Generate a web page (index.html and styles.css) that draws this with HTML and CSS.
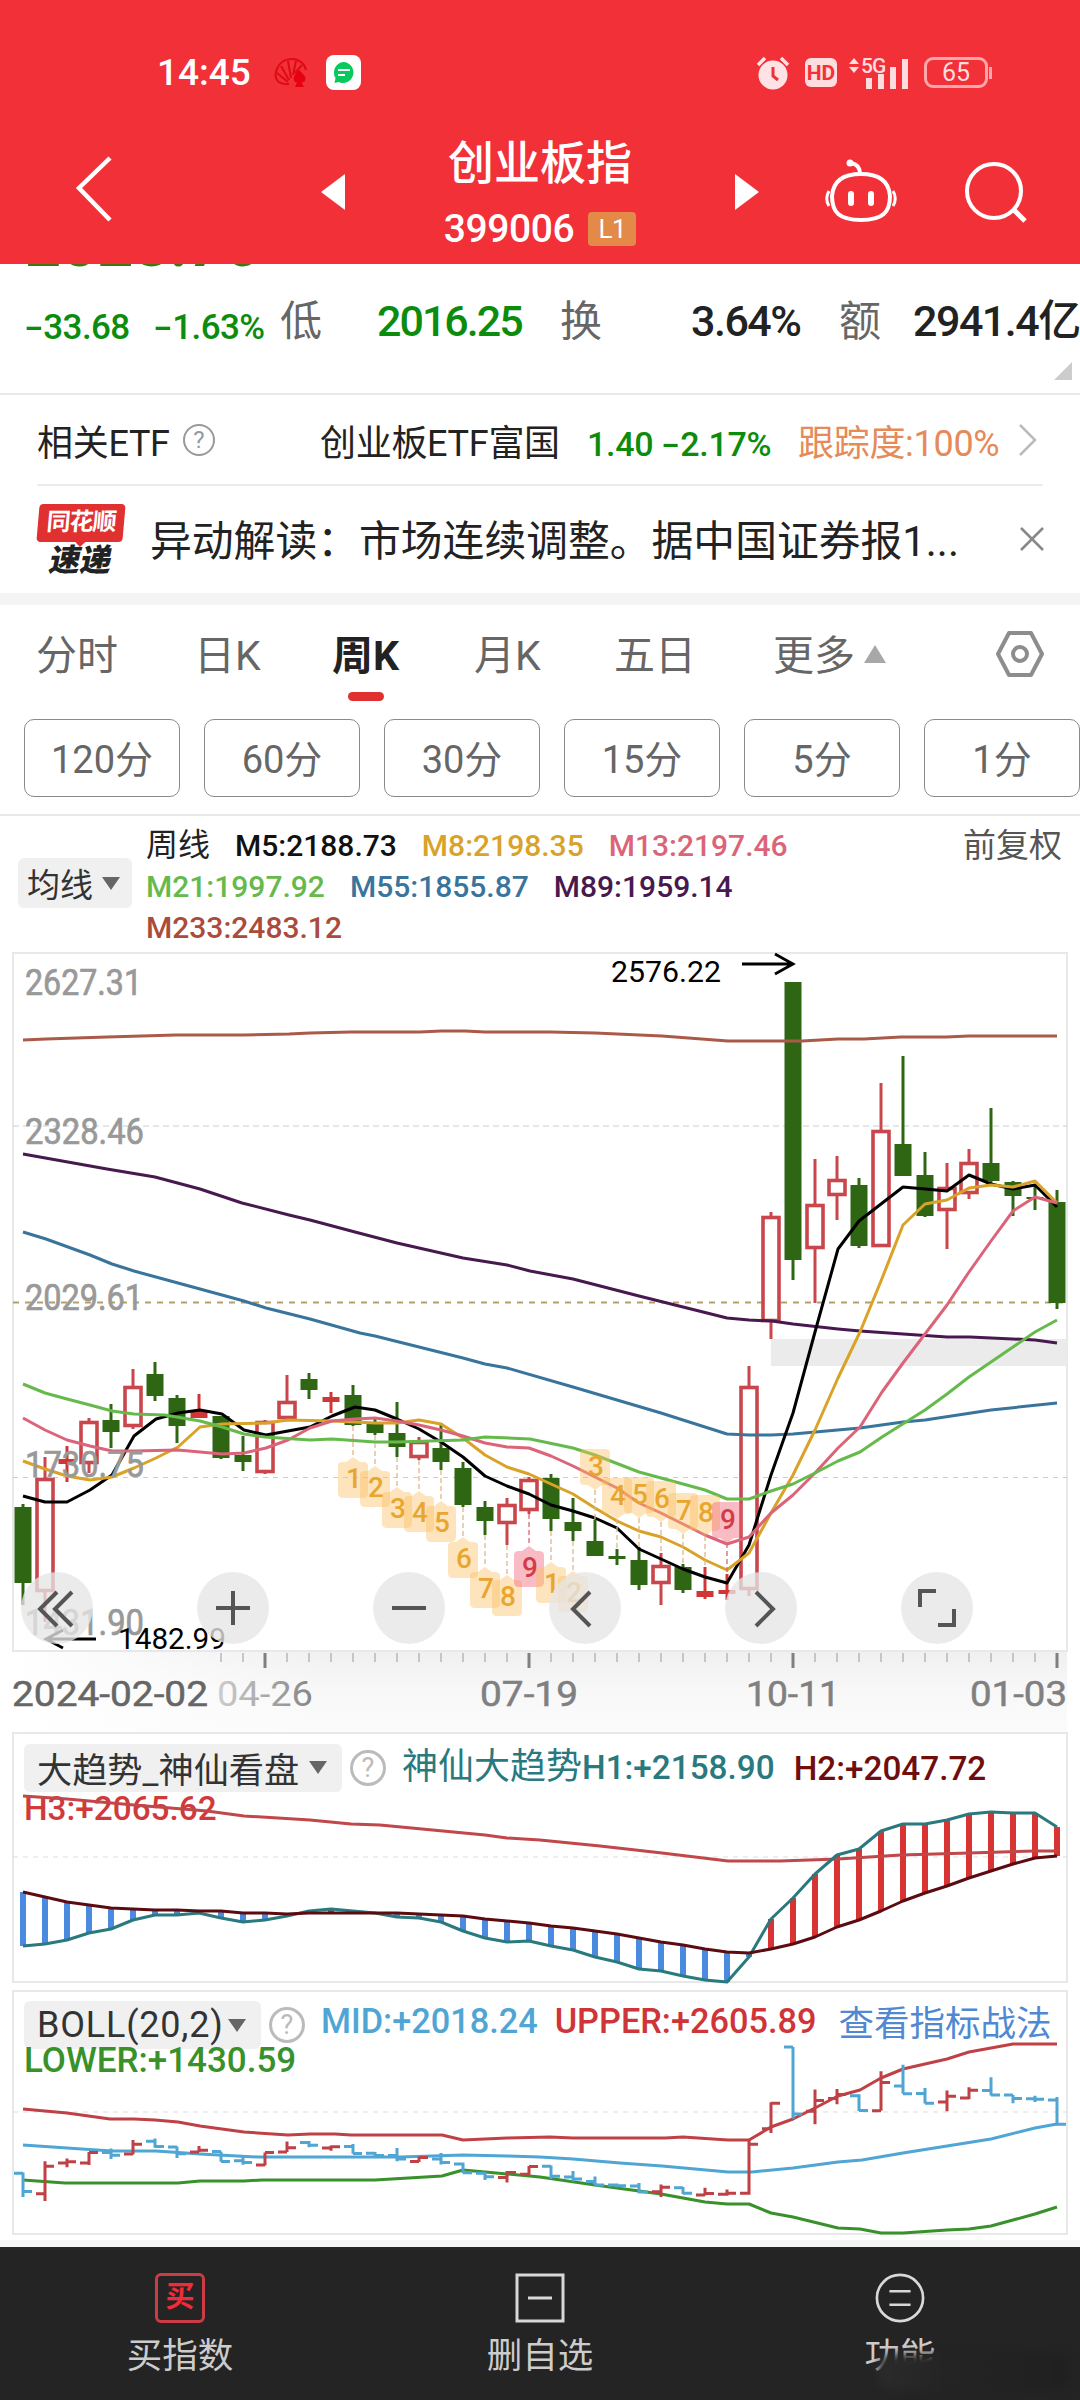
FILE: index.html
```html
<!DOCTYPE html>
<html lang="zh-CN">
<head>
    <meta charset="UTF-8">
    <meta name="viewport" content="width=device-width, initial-scale=1.0">
    <title>创业板指 399006</title>
    <link rel="stylesheet" href="styles.css">
</head>

<body>
    <!-- Status bar and title -->
    <header class="header">
        <div class="status-bar">
            <span class="clock">14:45</span>
            <svg class="flower-icon" width="34" height="30" viewBox="0 0 34 30" fill="none" stroke="#de0a14" stroke-width="2">
                <path d="M15 26C5 27 0 22 2 14C4 6 10 1 18 1C25 1 31 6 32 12M14 24L3 15M15 22L7 8M17 20L14 3M19 17L22 3M21 15L28 7"/>
                <path d="M25 12C21 16 18 20 21 24C24 25 29 25 31 23C33 19 29 16 25 12Z" fill="#e60010" stroke="none"/>
                <path d="M25 20L21 29H30Z" fill="#e60010" stroke="none"/>
            </svg>
            <svg class="chat-icon" width="35" height="35" viewBox="0 0 35 35">
                <rect width="35" height="35" rx="8" fill="#fff"/>
                <path d="M17.500 7a10.500 10.500 0 1 1-5 20l-4 1 1-5A10.500 10.500 0 0 1 17.500 7Z" fill="#07c95c"/>
                <path d="M12 15h12M12 20h7" stroke="#fff" stroke-width="2"/>
            </svg>
            <div class="status-right">
                <svg width="34" height="36" viewBox="0 0 34 36">
                    <circle cx="17" cy="20" r="14.500" fill="#ffe3e4"/>
                    <path d="M2 10L9 3M32 10L25 3" stroke="#ffe3e4" stroke-width="3.500"/>
                    <path d="M17 12v9l5 4" fill="none" stroke="#f23038" stroke-width="3"/>
                </svg>
                <span class="hd">HD</span>
                <svg class="signal" width="62" height="36" viewBox="0 0 62 36" fill="#ffdcdd">
                    <path d="M1 9L6 3L11 9ZM1 12L6 18L11 12Z"/>
                    <text x="13" y="18" class="sig-text">5G</text>
                    <rect x="18" y="23" width="6" height="11"/>
                    <rect x="30" y="19" width="6" height="15"/>
                    <rect x="42" y="12" width="6" height="22"/>
                    <rect x="54" y="4" width="6" height="30"/>
                </svg>
                <span class="battery">65</span>
            </div>
        </div>
        <div class="nav">
            <svg class="back" width="38" height="68" viewBox="0 0 38 68" fill="none" stroke="#fff" stroke-width="4.500"><path d="M35 3L4 33L35 65"/></svg>
            <svg class="prev" width="24" height="36" viewBox="0 0 24 36"><path d="M24 0V36L0 18Z" fill="#fff"/></svg>
            <div class="title">
                <h1>创业板指</h1>
                <p>399006 <span class="level">L1</span></p>
            </div>
            <svg class="next" width="24" height="36" viewBox="0 0 24 36"><path d="M0 0V36L24 18Z" fill="#fff"/></svg>
            <svg class="robot" width="72" height="66" viewBox="0 0 72 66" fill="none" stroke="#fff" stroke-width="4">
                <path d="M35 15C35 8 32 5 26 4"/>
                <circle cx="25" cy="4" r="2.500" fill="#fff" stroke-width="2"/>
                <path d="M36 15C55 15 64 23 65 37C65 53 58 61 36 61C14 61 7 53 7 37C8 23 17 15 36 15Z"/>
                <path d="M4 32C1 37 1 42 4 47M68 32C71 37 71 42 68 47" stroke-width="3"/>
                <path d="M26 35V44M46 35V44" stroke-width="6" stroke-linecap="round"/>
            </svg>
            <svg class="search" width="64" height="64" viewBox="0 0 64 64" fill="none" stroke="#fff" stroke-width="4"><circle cx="30" cy="30" r="27"/><path d="M50 49L61 60" stroke-width="5"/></svg>
        </div>
    </header>

    <!-- Quote summary -->
    <section class="quote">
        <div class="price-clip"><span>2028.76</span></div>
        <div class="quote-row">
            <span class="change"><i class="minus">-</i>33.68</span>
            <span class="change"><i class="minus">-</i>1.63%</span>
            <span class="label">低</span>
            <span class="value down">2016.25</span>
            <span class="label">换</span>
            <span class="value">3.64%</span>
            <span class="label">额</span>
            <span class="value">2941.4亿</span>
        </div>
        <i class="corner"></i>
    </section>

    <section class="etf-row">
        <span>相关ETF</span>
        <i class="help small">?</i>
        <span>创业板ETF富国</span>
        <span class="down">1.40</span>
        <span class="down"><i class="minus">-</i>2.17%</span>
        <span class="track">跟踪度:100%</span>
        <svg width="20" height="34" viewBox="0 0 20 34" fill="none" stroke="#bbb" stroke-width="2.500"><path d="M2 2L17 17L2 32"/></svg>
    </section>

    <section class="news-row">
        <div class="news-logo">
            <b class="logo-top">同花顺</b>
            <b class="logo-bottom">速递</b>
        </div>
        <p>异动解读：市场连续调整。据中国证券报1...</p>
        <svg width="24" height="24" viewBox="0 0 24 24" stroke="#888" stroke-width="2.500"><path d="M1 1L23 23M23 1L1 23"/></svg>
    </section>

    <!-- Period tabs -->
    <nav class="tabs">
        <span>分时</span>
        <span>日K</span>
        <span class="active">周K</span>
        <span>月K</span>
        <span>五日</span>
        <span>更多<i class="tri-up"></i></span>
        <svg width="50" height="48" viewBox="0 0 50 48" fill="none" stroke="#8d8d8d" stroke-width="4"><path d="M14 3H36L47 24L36 45H14L3 24Z" stroke-linejoin="round"/><circle cx="25" cy="24" r="7"/></svg>
    </nav>
    <div class="chips">
        <button>120分</button>
        <button>60分</button>
        <button>30分</button>
        <button>15分</button>
        <button>5分</button>
        <button>1分</button>
    </div>

    <!-- Moving average legend -->
    <section class="ma-head">
        <span class="pill ma-pill">均线<i class="tri-down"></i></span>
        <div class="ma-legend">
            <div><span class="c-text">周线</span><span class="c-m5">M5:2188.73</span><span class="c-m8">M8:2198.35</span><span class="c-m13">M13:2197.46</span></div>
            <div><span class="c-m21">M21:1997.92</span><span class="c-m55">M55:1855.87</span><span class="c-m89">M89:1959.14</span></div>
            <div><span class="c-m233">M233:2483.12</span></div>
        </div>
        <span class="adjust">前复权</span>
    </section>

    <!-- Weekly candles -->
    <section class="k-chart">
        <svg id="k-svg" width="1080" height="780" viewBox="0 952 1080 780"></svg>
        <div class="tools">
            <button><svg viewBox="0 0 72 72"><path d="M36 20L19 37L36 54M51 20L34 37L51 54"/></svg></button>
            <button><svg viewBox="0 0 72 72"><path d="M36 19V53M19 36H53"/></svg></button>
            <button><svg viewBox="0 0 72 72"><path d="M19 36H53"/></svg></button>
            <button><svg viewBox="0 0 72 72"><path d="M41 20L24 37L41 54"/></svg></button>
            <button><svg viewBox="0 0 72 72"><path d="M31 20L48 37L31 54"/></svg></button>
            <button><svg viewBox="0 0 72 72"><path d="M19 35V19H35M53 37V53H37"/></svg></button>
        </div>
    </section>

    <!-- Indicators -->
    <section class="panel trend">
        <div class="panel-head">
            <span class="pill">大趋势_神仙看盘<i class="tri-down"></i></span>
            <i class="help">?</i>
            <span class="c-h1"><span class="name">神仙大趋势</span>H1:+2158.90</span>
            <span class="c-h2">H2:+2047.72</span>
        </div>
        <div class="panel-line c-h3">H3:+2065.62</div>
        <svg id="trend-svg" width="1080" height="258" viewBox="0 1732 1080 258"></svg>
    </section>
    <section class="panel boll">
        <div class="panel-head">
            <span class="pill">BOLL(20,2)<i class="tri-down"></i></span>
            <i class="help">?</i>
            <span class="c-mid">MID:+2018.24</span>
            <span class="c-upper">UPPER:+2605.89</span>
            <a class="link">查看指标战法</a>
        </div>
        <div class="panel-line c-lower">LOWER:+1430.59</div>
        <svg id="boll-svg" width="1080" height="250" viewBox="0 1990 1080 250"></svg>
    </section>

    <footer class="bottom-bar">
        <a>
            <span class="buy-icon">买</span>
            买指数
        </a>
        <a>
            <svg width="50" height="50" viewBox="0 0 50 50" fill="none" stroke="#d8d8d8" stroke-width="3"><rect x="2" y="2" width="46" height="46"/><path d="M13 25H37"/></svg>
            删自选
        </a>
        <a>
            <svg width="52" height="52" viewBox="0 0 52 52" fill="none" stroke="#d8d8d8" stroke-width="2.800"><circle cx="26" cy="26" r="24"/><path d="M15 19H37M15 33H37"/></svg>
            功能
            <i class="smudge"></i>
        </a>
    </footer>

    <script src="chart.js"></script>
</body>
</html>
```
FILE: styles.css
```css
* {
    box-sizing: border-box;
}
body {
    margin: 0;
    width: 1080px;
    height: 2400px;
    overflow: hidden;
    background-color: #fff;
    color: #222;
    font-family: Roboto, "Noto Sans CJK SC", sans-serif;
}
h1, p {
    margin: 0;
    font-weight: 400;
}
i {
    font-style: normal;
}
svg {
    display: block;
    flex: none;
}
button {
    font-family: inherit;
    padding: 0;
    border: none;
}
.minus {
    display: inline-block;
    margin: 0 4px 0 3px;
    transform: scaleX(1.6);
}

/* header */
.header {
    height: 264px;
    background-color: #f23038;
    color: #fff;
}
.status-bar {
    height: 120px;
    padding: 25px 92px 0 157px;
    display: flex;
    align-items: center;
}
.clock {
    font-size: 37px;
    font-weight: 500;
    width: 117px;
}
.chat-icon {
    margin-left: 18px;
}
.status-right {
    margin-left: auto;
    display: flex;
    align-items: center;
}
.hd {
    width: 32px;
    height: 29px;
    margin-left: 15px;
    border-radius: 6px;
    background-color: #ffdcdd;
    color: #f23038;
    font-size: 21px;
    font-weight: 700;
    line-height: 30px;
    text-align: center;
}
.signal {
    margin-left: 11px;
}
.sig-text {
    font-size: 21px;
    font-weight: 500;
    letter-spacing: -1px;
}
.battery {
    position: relative;
    width: 64px;
    height: 31px;
    margin-left: 14px;
    border: 3px solid #ffa6aa;
    border-radius: 9px;
    color: #ffdcdd;
    font-size: 25px;
    line-height: 26px;
    text-align: center;
}
.battery::after {
    content: "";
    position: absolute;
    right: -7px;
    top: 7px;
    width: 3px;
    height: 12px;
    background-color: #ffa6aa;
}
.nav {
    height: 144px;
    padding-left: 75px;
    display: flex;
}
.back {
    margin-top: 35px;
}
.prev {
    margin: 54px 0 0 208px;
}
.title {
    width: 390px;
    padding-top: 10px;
    text-align: center;
}
.title h1 {
    font-size: 46px;
    line-height: 66px;
    font-weight: 500;
}
.title p {
    display: flex;
    justify-content: center;
    align-items: center;
    gap: 14px;
    font-size: 39px;
    font-weight: 500;
    letter-spacing: -0.4px;
    line-height: 66px;
}
.level {
    width: 48px;
    height: 34px;
    border-radius: 4px;
    background-color: #e38a48;
    font-size: 26px;
    font-weight: 400;
    line-height: 35px;
}
.next {
    margin-top: 54px;
}
.robot {
    margin: 39px 0 0 66px;
}
.search {
    margin: 41px 0 0 67px;
}

/* quote */
.quote {
    position: relative;
    height: 131px;
    border-bottom: 2px solid #e8e8e8;
}
.price-clip {
    height: 4px;
    padding-left: 25px;
    overflow: hidden;
    color: #3a7a10;
}
.price-clip span {
    display: block;
    margin-top: -51px;
    font-size: 63px;
    font-weight: 700;
    line-height: 64px;
}
.quote-row {
    height: 97px;
    padding-left: 25px;
    display: grid;
    grid-template-columns: 129px 126px 97px 183px 131px 148px 74px auto;
    align-items: baseline;
    align-content: center;
    white-space: nowrap;
}
.change {
    padding-top: 4px;
    position: relative;
    top: 3px;
    color: #0c8c0c;
    font-size: 35px;
    font-weight: 500;
    letter-spacing: -0.6px;
}
.label {
    color: #666;
    font-size: 42px;
}
.value {
    font-size: 43px;
    font-weight: 500;
    letter-spacing: -1.500px;
}
.value.down {
    letter-spacing: -2px;
}
.down {
    color: #0c8c0c;
}
.corner {
    position: absolute;
    right: 8px;
    bottom: 13px;
    border-left: 18px solid transparent;
    border-bottom: 18px solid #ccc;
}
.etf-row {
    height: 91px;
    margin: 0 37px;
    border-bottom: 2px solid #ececec;
    display: grid;
    grid-template-columns: 146px 137px 267px 75px 136px 220px auto;
    align-items: baseline;
    align-content: center;
    font-size: 36px;
    letter-spacing: -0.3px;
    white-space: nowrap;
}
.etf-row .down {
    font-size: 34px;
    font-weight: 500;
}
.etf-row .help, .etf-row svg {
    align-self: center;
}
.track {
    color: #e58a58;
}
.help {
    width: 36px;
    height: 36px;
    border: 3px solid #bbb;
    border-radius: 50%;
    color: #bbb;
    font-size: 27px;
    line-height: 31px;
    text-align: center;
    letter-spacing: 0;
}
.help.small {
    width: 32px;
    height: 32px;
    border: 2px solid #999;
    color: #999;
    font-size: 24px;
    line-height: 29px;
}
.news-row {
    height: 119px;
    padding: 0 36px 12px 38px;
    border-bottom: 12px solid #f4f4f4;
    display: flex;
    align-items: center;
}
.news-row p {
    margin-left: 26px;
    margin-right: auto;
    padding-top: 8px;
    font-size: 41.800px;
    white-space: nowrap;
}
.news-row svg {
    margin-top: 11px;
}
.news-logo {
    width: 86px;
    padding-top: 15px;
}
.logo-top, .logo-bottom {
    display: block;
    text-align: center;
    transform: skewX(-5deg);
}
.logo-top {
    position: relative;
    height: 38px;
    border-radius: 4px;
    background-color: #e03030;
    color: #fff;
    font-size: 24px;
    font-weight: 700;
    line-height: 37px;
    letter-spacing: -1px;
}
.logo-top::after {
    content: "";
    position: absolute;
    left: 38px;
    top: 37px;
    border: 6px solid transparent;
    border-top-color: #e03030;
}
.logo-bottom {
    font-size: 31px;
    font-weight: 900;
    line-height: 37px;
    transform: skewX(-12deg);
}

/* tabs */
.tabs {
    height: 114px;
    padding: 0 36px 20px 36px;
    display: grid;
    grid-template-columns: 158px 138px 142px 140px 159px 222px auto;
    align-items: center;
    color: #666;
    font-size: 41px;
}
.tabs svg {
    margin-top: 3px;
}
.tabs .active {
    position: relative;
    color: #222;
    font-weight: 700;
}
.tabs .active::after {
    content: "";
    position: absolute;
    left: 16px;
    bottom: -19px;
    width: 36px;
    height: 9px;
    border-radius: 5px;
    background-color: #e03030;
}
.tri-up {
    display: inline-block;
    margin: 0 0 7px 9px;
    border: 11px solid transparent;
    border-top: none;
    border-bottom: 18px solid #a8a8a8;
}
.chips {
    height: 97px;
    padding-left: 24px;
    border-bottom: 2px solid #e8e8e8;
    display: flex;
    gap: 24px;
}
.chips button {
    flex: none;
    width: 156px;
    height: 78px;
    padding-bottom: 3px;
    border: 1.500px solid #8a8a8a;
    border-radius: 10px;
    background-color: #fff;
    color: #666;
    font-size: 38px;
}

/* legend */
.ma-head {
    height: 136px;
    padding: 9px 18px 0 18px;
    display: flex;
}
.pill {
    display: flex;
    align-items: center;
    border-radius: 6px;
    background-color: #f0f0f0;
    color: #333;
    white-space: nowrap;
}
.ma-pill {
    width: 114px;
    height: 50px;
    margin-top: 33px;
    padding-left: 9px;
    font-size: 33px;
}
.tri-down {
    margin-left: 9px;
    border: 9px solid transparent;
    border-bottom: none;
    border-top: 13px solid #666;
}
.ma-legend {
    flex: 1;
    padding-left: 14px;
    font-size: 30px;
    font-weight: 500;
    line-height: 41px;
}
.ma-legend div {
    display: flex;
    gap: 25px;
    height: 41px;
}
.adjust {
    color: #555;
    font-size: 33px;
    line-height: 42px;
}
.c-text {
    font-size: 32px;
    font-weight: 400;
}
.c-m5 { color: #111; }
.c-m8 { color: #d9a228; }
.c-m13 { color: #dc6478; }
.c-m21 { color: #66ba4c; }
.c-m55 { color: #39749c; }
.c-m89 { color: #47194f; }
.c-m233 { color: #ab4b3b; }
.c-h1 { color: #29797e; }
.c-h2 { color: #700d0d; }
.c-h3 { color: #d03a3a; }
.c-mid { color: #4fa5d4; }
.c-upper { color: #cf3438; }
.c-lower { color: #38912a; }

/* candles */
.k-chart {
    position: relative;
    height: 780px;
}
.tools {
    position: absolute;
    left: 21px;
    top: 620px;
    display: flex;
    gap: 104px;
}
.tools button {
    width: 72px;
    height: 72px;
    border-radius: 50%;
    background-color: rgba(230, 230, 230, 0.78);
}
.tools path {
    fill: none;
    stroke: #555;
    stroke-width: 4;
}
.axis-label {
    fill: #999;
    font-size: 36px;
    stroke: #999;
    stroke-width: 0.700px;
}
.date-label {
    fill: #808080;
    font-size: 35px;
    stroke: #808080;
    stroke-width: 0.500px;
}
.date-first {
    fill: #666;
    stroke: #666;
}
.date-fade {
    fill: url(#fade);
    stroke: none;
}
.extreme {
    fill: #000;
    font-size: 30px;
}
.badge-text {
    fill: #e9a62e;
    font-size: 28px;
    font-weight: 500;
    text-anchor: middle;
}
.badge-red {
    fill: #d23b48;
}
.line {
    fill: none;
    stroke-width: 3;
    stroke-linejoin: round;
}

/* indicator panels */
.panel {
    position: relative;
    padding-left: 24px;
    font-size: 33.300px;
    font-weight: 500;
}
.panel > svg {
    position: absolute;
    left: 0;
    top: 0;
}
.panel-head {
    display: flex;
    align-items: center;
    white-space: nowrap;
}
.panel .pill {
    height: 48px;
    padding-left: 13px;
    font-size: 35.200px;
    font-weight: 400;
}
.panel .tri-down {
    margin-left: auto;
    margin-right: 15px;
}
.panel .help {
    margin-left: 8px;
    font-weight: 400;
}
.trend {
    height: 258px;
    padding-top: 11px;
}
.trend .pill {
    width: 318px;
}
.name {
    font-size: 36px;
    font-weight: 400;
}
.c-h1 {
    margin-left: 16px;
    line-height: 48px;
}
.c-h2 {
    margin-left: 19px;
    padding-top: 2px;
}
.panel-line {
    line-height: 34px;
}
.boll {
    height: 257px;
    padding-top: 11px;
    border-bottom: 7px solid #f4f4f4;
    font-size: 34.300px;
}
.boll .pill {
    width: 237px;
    font-size: 36px;
    letter-spacing: 0.8px;
}
.boll .panel-line {
    margin-top: -5px;
    font-size: 35px;
}
.boll .c-mid {
    margin: -9px 0 0 16px;
}
.boll .c-upper {
    margin: -9px 0 0 17px;
}
.link {
    margin: -10px 0 0 22px;
    color: #5088d2;
    font-size: 35.500px;
    font-weight: 400;
}

/* bottom bar */
.bottom-bar {
    height: 153px;
    background-color: #242424;
    display: flex;
}
.bottom-bar a {
    position: relative;
    flex: 1;
    padding-top: 26px;
    display: flex;
    flex-direction: column;
    align-items: center;
    color: #ccc;
    font-size: 35.500px;
    line-height: 66px;
}
.bottom-bar svg {
    height: 50px;
}
.buy-icon {
    width: 50px;
    height: 50px;
    border: 3px solid #cc3c44;
    border-radius: 6px;
    color: #f02c3a;
    font-size: 29px;
    font-weight: 700;
    line-height: 43px;
    text-align: center;
}
.smudge {
    position: absolute;
    left: 158px;
    top: 107px;
    width: 192px;
    height: 36px;
    border-radius: 14px;
    background: linear-gradient(90deg, #2b2b2b, #242424 35%, #202020);
    filter: blur(4px);
}
```
FILE: chart.js
```js
const STEP = 22;
const X0 = 23;

// [high, body top, body bottom, low, type]  g = down, r = up, f = up with a filled body
const candles = [
    [1504, 1507, 1583, 1605, 'g'], [1457, 1478, 1592, 1622, 'r'], [1446, 1459, 1464, 1482, 'f'],
    [1418, 1421, 1464, 1473, 'r'], [1404, 1420, 1432, 1448, 'g'], [1369, 1386, 1427, 1429, 'r'],
    [1362, 1374, 1396, 1401, 'g'], [1395, 1398, 1426, 1443, 'g'], [1394, 1411, 1418, 1418, 'f'],
    [1416, 1416, 1458, 1459, 'g'], [1436, 1455, 1462, 1471, 'g'], [1420, 1421, 1473, 1474, 'r'],
    [1375, 1401, 1419, 1419, 'r'], [1373, 1379, 1390, 1399, 'g'], [1392, 1397, 1402, 1413, 'f'],
    [1385, 1395, 1425, 1426, 'g'], [1419, 1424, 1433, 1435, 'g'], [1402, 1433, 1447, 1457, 'g'],
    [1437, 1441, 1458, 1460, 'r'], [1423, 1448, 1462, 1470, 'g'], [1462, 1468, 1505, 1507, 'g'],
    [1501, 1507, 1521, 1535, 'g'], [1498, 1504, 1524, 1545, 'r'], [1477, 1479, 1511, 1514, 'r'],
    [1474, 1478, 1519, 1531, 'g'], [1498, 1522, 1531, 1541, 'g'], [1520, 1541, 1556, 1556, 'g'],
    [1549, 1556, 1559, 1565, 'g'], [1547, 1560, 1585, 1590, 'g'], [1553, 1565, 1584, 1605, 'r'],
    [1564, 1567, 1590, 1593, 'g'], [1567, 1591, 1597, 1599, 'f'], [1574, 1590, 1594, 1600, 'f'],
    [1366, 1386, 1590, 1596, 'r'], [1212, 1216, 1322, 1339, 'r'], [982, 982, 1260, 1280, 'g'],
    [1159, 1204, 1249, 1303, 'r'], [1156, 1179, 1196, 1220, 'r'], [1178, 1185, 1246, 1248, 'g'],
    [1083, 1130, 1247, 1247, 'r'], [1056, 1144, 1176, 1176, 'g'], [1152, 1175, 1216, 1217, 'g'],
    [1163, 1187, 1211, 1249, 'r'], [1149, 1162, 1194, 1199, 'r'], [1108, 1163, 1181, 1183, 'g'],
    [1181, 1182, 1196, 1216, 'g'], [1185, 1197, 1199, 1210, 'g'], [1190, 1202, 1303, 1309, 'g']
];

const averages = [
    ['#ab5a4a', '23,1040 46,1039 107,1037 176,1035 244,1035 289,1034 310,1033 351,1032 420,1032 441,1031 465,1031 485,1032 550,1032 595,1033 662,1036 728,1041 802,1041 838,1039 864,1039 901,1037 946,1037 969,1036 1057,1036'],
    ['#47194f', '23,1154 107,1169 155,1177 200,1189 242,1203 289,1215 310,1220 355,1232 397,1243 463,1258 507,1265 530,1271 573,1279 639,1296 727,1318 749,1320 772,1321 793,1324 838,1329 860,1331 903,1334 947,1337 970,1337 1035,1340 1057,1343'],
    ['#39749c', '23,1232 46,1239 90,1255 112,1264 134,1271 178,1283 244,1301 266,1308 310,1319 360,1333 375,1336 463,1358 485,1364 507,1368 573,1387 617,1400 661,1413 727,1434 749,1435 771,1435 793,1434 860,1428 903,1422 925,1420 991,1410 1057,1403'],
    ['#000', '23,1496 45,1502 67,1502 90,1490 112,1475 134,1436 156,1419 178,1413 200,1410 222,1414 244,1430 266,1435 288,1431 310,1427 332,1416 355,1407 375,1410 397,1419 419,1429 441,1442 463,1457 485,1476 507,1486 529,1494 551,1505 573,1511 595,1518 617,1528 639,1549 661,1559 683,1569 705,1577 727,1583 749,1545 771,1475 793,1413 815,1332 838,1249 859,1221 881,1204 903,1187 925,1189 947,1191 969,1175 991,1184 1013,1189 1035,1185 1057,1207'],
    ['#d9a228', '23,1461 45,1469 67,1476 90,1480 112,1477 134,1468 156,1458 178,1447 200,1427 222,1424 266,1423 288,1420 332,1421 355,1422 375,1423 397,1423 419,1420 441,1424 463,1438 485,1455 507,1467 529,1474 551,1484 573,1494 595,1508 617,1521 639,1531 661,1537 683,1547 705,1560 727,1570 749,1553 771,1513 793,1475 815,1430 838,1378 860,1332 881,1281 903,1225 925,1204 947,1200 969,1188 991,1185 1013,1187 1035,1181 1057,1203'],
    ['#dc6478', '23,1418 45,1430 67,1440 90,1446 112,1451 134,1451 178,1450 222,1454 244,1453 266,1448 288,1440 310,1428 332,1421 355,1419 375,1418 397,1421 419,1425 441,1430 463,1436 485,1443 507,1447 529,1448 551,1456 573,1466 595,1477 617,1488 639,1503 661,1513 683,1524 705,1535 727,1544 749,1537 771,1513 793,1495 815,1473 838,1448 860,1427 882,1392 903,1363 947,1305 969,1272 991,1241 1013,1211 1035,1197 1057,1203'],
    ['#66ba4c', '23,1384 45,1393 67,1399 90,1405 112,1411 134,1414 165,1415 200,1421 222,1427 244,1434 265,1437 310,1440 332,1439 375,1442 397,1442 463,1440 485,1437 530,1439 573,1448 595,1455 639,1472 661,1478 705,1490 727,1499 749,1499 771,1491 793,1484 815,1473 838,1461 860,1452 882,1437 925,1410 947,1394 969,1377 1013,1347 1035,1332 1057,1320']
];

// [candle index, digit, top]
const countUp = [
    [15, 1, 1457], [16, 2, 1466], [17, 3, 1487], [18, 4, 1491], [19, 5, 1501], [20, 6, 1537],
    [21, 7, 1567], [22, 8, 1575], [23, 9, 1546], [24, 1, 1562], [25, 2, 1571]
];
const countDown = [
    [26, 3, 1449], [27, 4, 1478], [28, 5, 1477], [29, 6, 1481], [30, 7, 1493], [31, 8, 1495], [32, 9, 1502]
];

const h1 = [1946, 1944, 1940, 1933, 1929, 1920, 1915, 1915, 1913, 1918, 1922, 1920, 1916, 1911, 1909, 1911,
    1913, 1917, 1918, 1922, 1931, 1938, 1942, 1941, 1946, 1950, 1957, 1962, 1969, 1971, 1976, 1980,
    1982, 1957, 1919, 1898, 1874, 1855, 1849, 1831, 1824, 1824, 1820, 1814, 1812, 1813, 1813, 1827];
const h2 = [1892, 1897, 1902, 1905, 1908, 1909, 1910, 1910, 1911, 1911, 1913, 1913, 1914, 1913, 1913, 1913,
    1913, 1913, 1914, 1915, 1916, 1919, 1921, 1923, 1926, 1928, 1931, 1934, 1938, 1942, 1945, 1949,
    1952, 1953, 1949, 1944, 1937, 1927, 1920, 1911, 1901, 1893, 1886, 1878, 1871, 1864, 1858, 1856];
const h3 = '23,1796 67,1799 134,1805 207,1811 244,1816 310,1820 351,1824 380,1825 485,1835 507,1838 540,1840 600,1846 662,1853 728,1861 780,1861 838,1859 901,1855 969,1853 1035,1851 1057,1851';

const boll = [
    ['#38912a', '23,2180 65,2183 178,2183 200,2181 244,2181 262,2180 375,2180 442,2176 463,2170 485,2172 540,2177 595,2185 661,2194 705,2202 727,2204 749,2204 771,2213 793,2217 838,2228 860,2229 881,2233 903,2233 947,2230 969,2229 991,2226 1013,2220 1035,2214 1057,2207'],
    ['#4fa5d4', '23,2145 67,2148 112,2151 156,2151 200,2154 258,2157 400,2157 463,2155 507,2156 540,2157 573,2159 620,2163 662,2166 728,2172 752,2172 793,2168 838,2162 862,2160 903,2153 947,2146 991,2139 1035,2128 1057,2124'],
    ['#bf4045', '23,2109 67,2113 110,2119 134,2119 155,2120 178,2122 200,2126 244,2132 288,2135 310,2134 335,2134 351,2135 442,2135 463,2140 507,2138 550,2137 573,2138 665,2138 683,2137 728,2140 749,2140 771,2127 793,2119 815,2108 838,2096 860,2090 881,2078 903,2069 947,2059 969,2052 1013,2044 1057,2044']
];

const px = i => X0 + i * STEP;
const rect = (x, y, w, h, attrs) => `<rect x="${x}" y="${y}" width="${w}" height="${h}" ${attrs}/>`;
const line = (x1, y1, x2, y2, attrs) => `<line x1="${x1}" y1="${y1}" x2="${x2}" y2="${y2}" ${attrs}/>`;
const poly = (color, points) => `<polyline class="line" stroke="${color}" points="${points}"/>`;
const label = (text, x, y, width, cls) =>
    `<text class="${cls}" x="${x}" y="${y}" textLength="${width}" lengthAdjust="spacingAndGlyphs">${text}</text>`;

function drawCandles() {
    let out = '<defs>'
        + '<linearGradient id="axis-bg" x2="0" y2="1"><stop stop-color="#f0f0f0"/><stop offset="0.5" stop-color="#f8f8f8"/><stop offset="1" stop-color="#fbfbfb"/></linearGradient>'
        + '<linearGradient id="fade" gradientUnits="userSpaceOnUse" x1="210" x2="320" y1="0" y2="0"><stop stop-color="#d2d2d2"/><stop offset="1" stop-color="#808080"/></linearGradient>'
        + '<linearGradient id="axis-left"><stop stop-color="#fff"/><stop offset="1" stop-color="#fff" stop-opacity="0"/></linearGradient>'
        + '</defs>';
    out += rect(13, 1652, 1054, 80, 'fill="url(#axis-bg)"');
    out += rect(13, 1652, 320, 80, 'fill="url(#axis-left)"');
    out += rect(13, 953, 1054, 698, 'fill="none" stroke="#e8e8e8" stroke-width="2"');
    out += line(13, 1126, 1067, 1126, 'stroke="#ccc" stroke-dasharray="6 4"');
    out += line(13, 1477.5, 1067, 1477.5, 'stroke="#ccc" stroke-dasharray="5 5"');
    out += line(13, 1302.5, 1067, 1302.5, 'stroke="#b99d66" stroke-width="1.8" stroke-dasharray="6 6"');
    out += rect(771, 1339, 296, 27, 'fill="#ebebeb"');

    for (let i = 9; i < 48; i++) {
        const major = [11, 23, 35, 47].includes(i);
        out += line(px(i), 1653, px(i), major ? 1668 : 1662, major ? 'stroke="#808080" stroke-width="3"' : 'stroke="#999"');
    }

    candles.forEach(([high, top, bottom, low, type], i) => {
        const x = px(i);
        const color = type === 'g' ? '#2f6614' : type === 'f' ? '#d03636' : '#c9474c';
        out += line(x, high, x, top, `stroke="${color}" stroke-width="3"`);
        out += line(x, bottom, x, low, `stroke="${color}" stroke-width="3"`);
        if (type === 'r') {
            out += rect(x - 8, top + 1.5, 16, bottom - top - 3, `fill="#fff" stroke="${color}" stroke-width="3.6"`);
        } else {
            out += rect(x - 8.5, top, 17, bottom - top, `fill="${color}"`);
        }
    });

    averages.forEach(([color, points]) => out += poly(color, points));
    out += drawBadges();

    out += label('2627.31', 25, 995, 117, 'axis-label');
    out += label('2328.46', 25, 1144, 119, 'axis-label');
    out += label('2029.61', 25, 1310, 118, 'axis-label');
    out += label('1730.75', 25, 1477, 119, 'axis-label');
    out += label('1431.90', 25, 1635, 119, 'axis-label');

    out += label('2576.22', 611, 982, 110, 'extreme');
    out += '<path d="M742 964H793M775 954L793 964L775 974" fill="none" stroke="#000" stroke-width="2.800"/>';
    out += label('1482.99', 118, 1649, 108, 'extreme');
    out += '<path d="M96 1639H46M63 1630L46 1639L63 1648" fill="none" stroke="#000" stroke-width="2.800"/>';

    out += label('2024-02-02', 12, 1706, 196, 'date-label date-first');
    out += label('04-26', 217, 1706, 96, 'date-label date-fade');
    out += label('07-19', 480, 1706, 98, 'date-label');
    out += label('10-11', 746, 1706, 94, 'date-label');
    out += label('01-03', 970, 1706, 97, 'date-label');
    document.getElementById('k-svg').innerHTML = out;
}

function drawBadges() {
    let out = '';
    const fills = n => n === 9 ? 'rgba(240,95,115,0.42)' : 'rgba(250,190,95,0.42)';
    const dash = n => `stroke="${n === 9 ? '#d06a78' : '#dcb98a'}" stroke-width="1.300" stroke-dasharray="5 3"`;
    countUp.forEach(([i, n, y]) => {
        const x = px(i);
        out += line(x, candles[i][3], x, y, dash(n));
        out += `<path fill="${fills(n)}" d="M${x} ${y}L${x + 7} ${y + 5}H${x + 10}Q${x + 15} ${y + 5} ${x + 15} ${y + 9}V${y + 36}Q${x + 15} ${y + 41} ${x + 10} ${y + 41}H${x - 10}Q${x - 15} ${y + 41} ${x - 15} ${y + 36}V${y + 9}Q${x - 15} ${y + 5} ${x - 10} ${y + 5}H${x - 7}Z"/>`;
        out += `<text class="badge-text ${n === 9 ? 'badge-red' : ''}" x="${x + 1}" y="${y + 31}">${n}</text>`;
    });
    countDown.forEach(([i, n, y]) => {
        const x = px(i);
        out += line(x, y + 41, x, candles[i][0], dash(n));
        out += `<path fill="${fills(n)}" d="M${x} ${y + 41}L${x + 7} ${y + 36}H${x + 10}Q${x + 15} ${y + 36} ${x + 15} ${y + 32}V${y + 4}Q${x + 15} ${y} ${x + 10} ${y}H${x - 10}Q${x - 15} ${y} ${x - 15} ${y + 4}V${y + 32}Q${x - 15} ${y + 36} ${x - 10} ${y + 36}H${x - 7}Z"/>`;
        out += `<text class="badge-text ${n === 9 ? 'badge-red' : ''}" x="${x + 1}" y="${y + 27}">${n}</text>`;
    });
    return out;
}

function drawTrend() {
    let out = rect(13, 1733, 1054, 249, 'fill="none" stroke="#e8e8e8" stroke-width="2"');
    out += line(13, 1857, 1067, 1857, 'stroke="#ddd" stroke-dasharray="5 5"');
    h1.forEach((y, i) => {
        const top = Math.min(y, h2[i]);
        out += rect(px(i) - 3, top, 6, Math.abs(y - h2[i]), `fill="${y > h2[i] ? '#4a8be0' : '#d93434'}"`);
    });
    out += poly('#c0474a', h3);
    out += poly('#29797e', h1.map((y, i) => px(i) + ',' + y).join(' '));
    out += poly('#5c0c10', h2.map((y, i) => px(i) + ',' + y).join(' '));
    document.getElementById('trend-svg').innerHTML = out;
}

function drawBoll() {
    let out = rect(13, 1991, 1054, 243, 'fill="none" stroke="#e8e8e8" stroke-width="2"');
    out += line(13, 2112, 1067, 2112, 'stroke="#ddd" stroke-dasharray="5 5"');
    boll.forEach(([color, points]) => out += poly(color, points));
    const scale = y => (2047 + (y - 982) * 0.2406).toFixed(1);
    candles.forEach(([high, top, bottom, low, type], i) => {
        const x = px(i);
        const down = type === 'g';
        const open = scale(down ? top : bottom);
        const close = scale(down ? bottom : top);
        out += `<path d="M${x} ${scale(high)}V${scale(low)}M${x - 9} ${open}H${x}M${x} ${close}H${x + 9}" fill="none" stroke="${down ? '#4fa5d4' : '#bf4045'}" stroke-width="3"/>`;
    });
    document.getElementById('boll-svg').innerHTML = out;
}

drawCandles();
drawTrend();
drawBoll();
```
